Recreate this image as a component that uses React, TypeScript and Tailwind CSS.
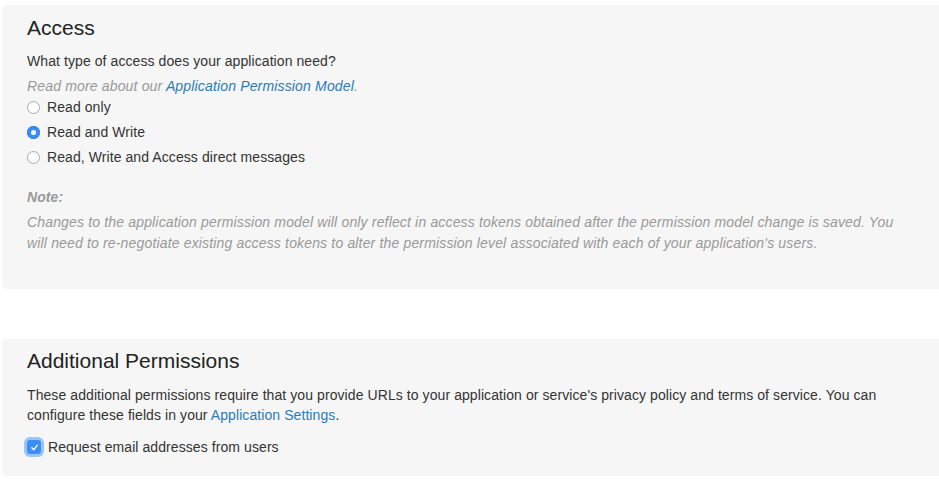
import React from "react";

function Radio({ checked }: { checked?: boolean }) {
  return checked ? (
    <span className="flex h-[13px] w-[13px] items-center justify-center rounded-full bg-[#3a8ef6] shadow-[inset_0_0_0_1px_#2f7fe6]">
      <span className="h-[5px] w-[5px] rounded-full bg-white" />
    </span>
  ) : (
    <span className="h-[13px] w-[13px] rounded-full border border-[#a9a9a9] bg-white" />
  );
}

export default function App() {
  const font = { fontFamily: '"Liberation Sans", Arial, sans-serif' };
  return (
    <div className="min-h-[481px] bg-white pt-[5px] pl-[2px] text-[14px] tracking-[0.08px] text-[#333333]" style={font}>
      <section className="rounded-l-[4px] bg-[#f6f6f6] pt-[10px] pb-[35px] pl-[25px] pr-[38px]">
        <h2 className="text-[21px] leading-[26px] tracking-normal text-[#222222]">Access</h2>
        <p className="mt-[10px] leading-[20px]">What type of access does your application need?</p>
        <p className="mt-[5px] leading-[20px] italic tracking-[0.16px] text-[#999999]">
          Read more about our <a className="text-[#2b7bb9]">Application Permission Model</a>.
        </p>
        <div className="mt-[1px] flex flex-col gap-[5px]">
          {[
            ["Read only", false],
            ["Read and Write", true],
            ["Read, Write and Access direct messages", false],
          ].map(([label, c]) => (
            <label key={label as string} className="flex h-[20px] items-center gap-[7px]">
              <Radio checked={c as boolean} />
              <span>{label as string}</span>
            </label>
          ))}
        </div>
        <p className="mt-[20px] leading-[20px] font-bold italic text-[#999999]">Note:</p>
        <p className="mt-[5px] leading-[21px] italic tracking-[0.16px] text-[#999999]">
          Changes to the application permission model will only reflect in access tokens obtained after the permission model change is saved. You will need to re-negotiate existing access tokens to alter the permission level associated with each of your application's users.
        </p>
      </section>

      <section className="mt-[50px] rounded-l-[4px] bg-[#f6f6f6] pt-[9px] pb-[19px] pl-[25px] pr-[38px]">
        <h2 className="text-[21px] leading-[26px] tracking-normal text-[#222222]">Additional Permissions</h2>
        <p className="mt-[11px] leading-[20px]">
          These additional permissions require that you provide URLs to your application or service's privacy policy and terms of service. You can configure these fields in your <a className="text-[#2b7bb9]">Application Settings</a>.
        </p>
        <label className="mt-[12px] flex h-[20px] items-center gap-[7px]">
          <span className="flex h-[14px] w-[14px] items-center justify-center rounded-[3px] bg-[#3a8ef6] shadow-[0_0_0_3px_#9cc4f7]">
            <svg width="9" height="9" viewBox="0 0 10 10" fill="none">
              <path d="M2 5.3 L4.2 7.4 L8 2.6" stroke="white" strokeWidth="1.6" strokeLinecap="round" strokeLinejoin="round" />
            </svg>
          </span>
          <span>Request email addresses from users</span>
        </label>
      </section>
    </div>
  );
}
